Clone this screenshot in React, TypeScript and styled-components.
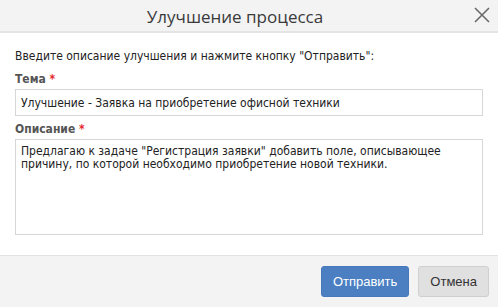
import React from "react"
import styled, { createGlobalStyle } from "styled-components"

const GlobalStyle = createGlobalStyle`
  html, body {
    margin: 0;
    padding: 0;
    background: #ffffff;
  }
  body {
    font-family: "DejaVu Sans Condensed", "DejaVu Sans", Tahoma, sans-serif;
  }
`

const App = () => {
  return (
    <>
      <GlobalStyle />
      <Dialog>
        <Header>
          <Title>Улучшение процесса</Title>
          <CloseButton aria-label="Закрыть">
            <svg width="16" height="16" viewBox="0 0 16 16">
              <path d="M1 1 L15 15 M15 1 L1 15" stroke="#6b6b6b" strokeWidth="1.6" />
            </svg>
          </CloseButton>
        </Header>
        <Body>
          <Intro>Введите описание улучшения и нажмите кнопку "Отправить":</Intro>
          <Label>
            Тема <Required>*</Required>
          </Label>
          <TextInput defaultValue="Улучшение - Заявка на приобретение офисной техники" />
          <Label>
            Описание <Required>*</Required>
          </Label>
          <TextArea
            defaultValue={
              'Предлагаю к задаче "Регистрация заявки" добавить поле, описывающее причину, по которой необходимо приобретение новой техники.'
            }
          />
        </Body>
        <Footer>
          <Button primary>Отправить</Button>
          <Button>Отмена</Button>
        </Footer>
      </Dialog>
    </>
  )
}

export default App

const Dialog = styled.div`
  width: 498px;
  height: 307px;
  display: flex;
  flex-direction: column;
  background: #fff;
`

const Header = styled.div`
  height: 31px;
  flex: none;
  background: #f3f3f3;
  border-bottom: 2px solid #e4e4e4;
  display: flex;
  align-items: center;
  justify-content: center;
  padding-right: 28px;
  position: relative;
`

const Title = styled.div`
  font-family: "Open Sans", sans-serif;
  font-size: 17px;
  color: #3a3a3a;
  margin-top: 1px;
`

const CloseButton = styled.button`
  position: absolute;
  right: 8px;
  top: 7px;
  width: 16px;
  height: 16px;
  padding: 0;
  border: none;
  background: none;
  display: flex;
  cursor: pointer;
`

const Body = styled.div`
  flex: 1;
  padding: 16px 15px 0 15px;
  display: flex;
  flex-direction: column;
  border-bottom: 1px solid #e2e2e2;
`

const Intro = styled.div`
  font-size: 12px;
  line-height: 15px;
  color: #222;
  margin-bottom: 8px;
`

const Label = styled.div`
  font-size: 12px;
  font-weight: bold;
  line-height: 15px;
  color: #555;
  margin-bottom: 2px;
`

const Required = styled.span`
  color: #e5262b;
`

const TextInput = styled.input`
  box-sizing: border-box;
  height: 27px;
  width: 100%;
  border: 1px solid #d6d6d6;
  padding: 0 5px;
  font-family: "DejaVu Sans Condensed", "DejaVu Sans", Tahoma, sans-serif;
  font-size: 12px;
  color: #222;
  margin-bottom: 6px;
  outline: none;
`

const TextArea = styled.textarea`
  box-sizing: border-box;
  height: 96px;
  width: 100%;
  border: 1px solid #d6d6d6;
  padding: 5px 5px;
  font-family: "DejaVu Sans Condensed", "DejaVu Sans", Tahoma, sans-serif;
  font-size: 12px;
  line-height: 13px;
  color: #222;
  resize: none;
  outline: none;
`

const Footer = styled.div`
  height: 51px;
  flex: none;
  background: #f3f3f3;
  display: flex;
  justify-content: flex-end;
  align-items: center;
  gap: 9px;
  padding: 0 9px 0 0;
  box-sizing: border-box;
`

const Button = styled.button<{ primary?: boolean }>`
  height: 31px;
  padding: 0 11px;
  border-radius: 3px;
  font-family: "Liberation Sans", Arial, sans-serif;
  font-size: 13px;
  cursor: pointer;
  border: 1px solid ${({ primary }) => (primary ? "#4778bb" : "#cfcfcf")};
  background: ${({ primary }) => (primary ? "#4b7fc2" : "#e0e0e0")};
  color: ${({ primary }) => (primary ? "#fff" : "#333")};
`
